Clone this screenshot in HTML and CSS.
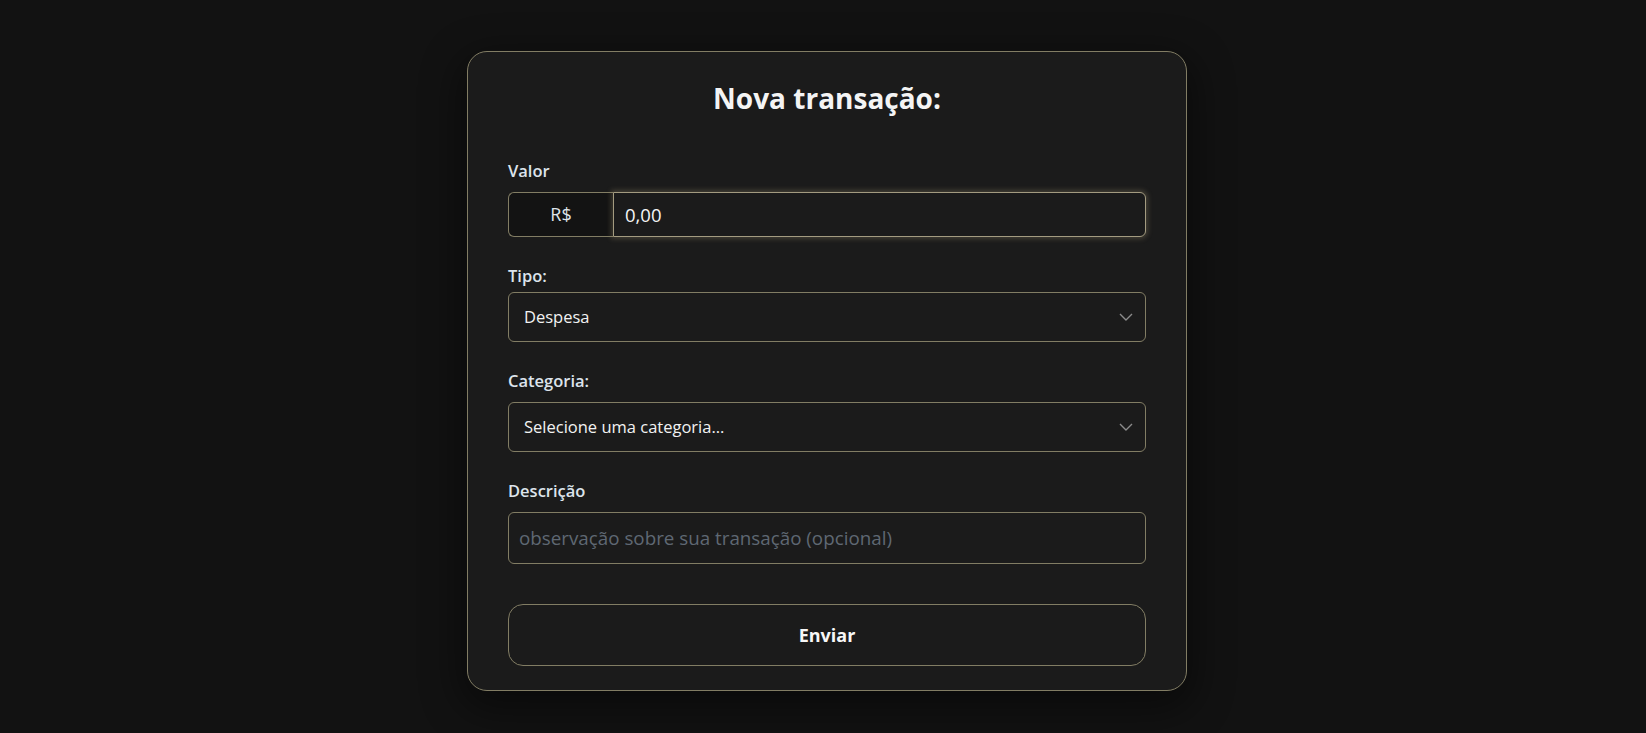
FILE: index.html
```html
<!DOCTYPE html>
<html lang="pt-BR">
<head>
<meta charset="utf-8">
<title>Nova transação</title>
<link rel="stylesheet" href="styles.css">
</head>
<body>
<main class="page">
  <form class="card">
    <h1 class="title">Nova transação:</h1>

    <div class="field">
      <label class="label">Valor</label>
      <div class="money">
        <span class="prefix">R$</span>
        <div class="money-input">0,00</div>
      </div>
    </div>

    <div class="field">
      <label class="label label-tight">Tipo:</label>
      <div class="select">
        <span>Despesa</span>
        <svg class="chevron" viewBox="0 0 14 8" width="14" height="8"><path d="M1 1 L7 7 L13 1" fill="none" stroke="currentColor" stroke-width="1.4"/></svg>
      </div>
    </div>

    <div class="field">
      <label class="label">Categoria:</label>
      <div class="select">
        <span>Selecione uma categoria...</span>
        <svg class="chevron" viewBox="0 0 14 8" width="14" height="8"><path d="M1 1 L7 7 L13 1" fill="none" stroke="currentColor" stroke-width="1.4"/></svg>
      </div>
    </div>

    <div class="field field-last">
      <label class="label">Descrição</label>
      <div class="text-input"><span class="placeholder">observação sobre sua transação (opcional)</span></div>
    </div>

    <div class="button">Enviar</div>
  </form>
</main>
</body>
</html>
```

FILE: styles.css
```css
* { box-sizing: border-box; }

html, body {
  margin: 0;
  padding: 0;
  background: #121212;
  height: 100%;
}

body {
  font-family: "Open Sans", "Noto Sans", sans-serif;
  color: #e6e6e6;
}

.page {
  display: flex;
  justify-content: center;
  padding: 51px 0 0 8px;
}

.card {
  width: 720px;
  background: #1b1b1b;
  border: 1px solid #827d64;
  border-radius: 20px;
  padding: 30px 40px 24px;
  box-shadow: 0 12px 40px 6px rgba(0, 0, 0, 0.45);
  display: flex;
  flex-direction: column;
}

.title {
  margin: 0 0 43px;
  text-align: center;
  font-size: 28px;
  line-height: 33.6px;
  font-weight: 700;
  color: #f4f4f4;
}

.field {
  display: flex;
  flex-direction: column;
  margin-bottom: 27px;
}

.field-last {
  margin-bottom: 40px;
}

.label {
  font-size: 16.5px;
  line-height: 24px;
  font-weight: 600;
  color: #dde4ec;
  margin-bottom: 9px;
}

.label-tight {
  margin-bottom: 4px;
}

.money {
  display: flex;
  height: 45px;
}

.prefix {
  width: 105px;
  flex: none;
  display: flex;
  align-items: center;
  justify-content: center;
  background: #131313;
  border: 1px solid #827d64;
  border-right: none;
  border-radius: 6px 0 0 6px;
  font-size: 18px;
  color: #dfe4ea;
}

.money-input {
  flex: 1;
  display: flex;
  align-items: center;
  padding-left: 11px;
  background: #1b1b1b;
  border: 1px solid #a39b80;
  border-radius: 0 6px 6px 0;
  box-shadow: 0 0 5px 2px rgba(150, 138, 105, 0.33);
  font-size: 18.5px;
  color: #f5f5f5;
}

.select {
  height: 50px;
  display: flex;
  align-items: center;
  justify-content: space-between;
  padding: 0 12px 0 15px;
  border: 1px solid #827d64;
  border-radius: 6px;
  font-size: 16.5px;
  color: #f2f2f2;
}

.chevron {
  color: #8b8b8b;
  margin-top: 1px;
}

.text-input {
  height: 52px;
  display: flex;
  align-items: center;
  padding-left: 10px;
  border: 1px solid #827d64;
  border-radius: 6px;
  font-size: 18.8px;
}

.placeholder {
  color: #5f6873;
}

.button {
  height: 62px;
  display: flex;
  align-items: center;
  justify-content: center;
  border: 1px solid #827d64;
  border-radius: 15px;
  font-size: 18px;
  font-weight: 700;
  color: #f7f7f7;
}
```
